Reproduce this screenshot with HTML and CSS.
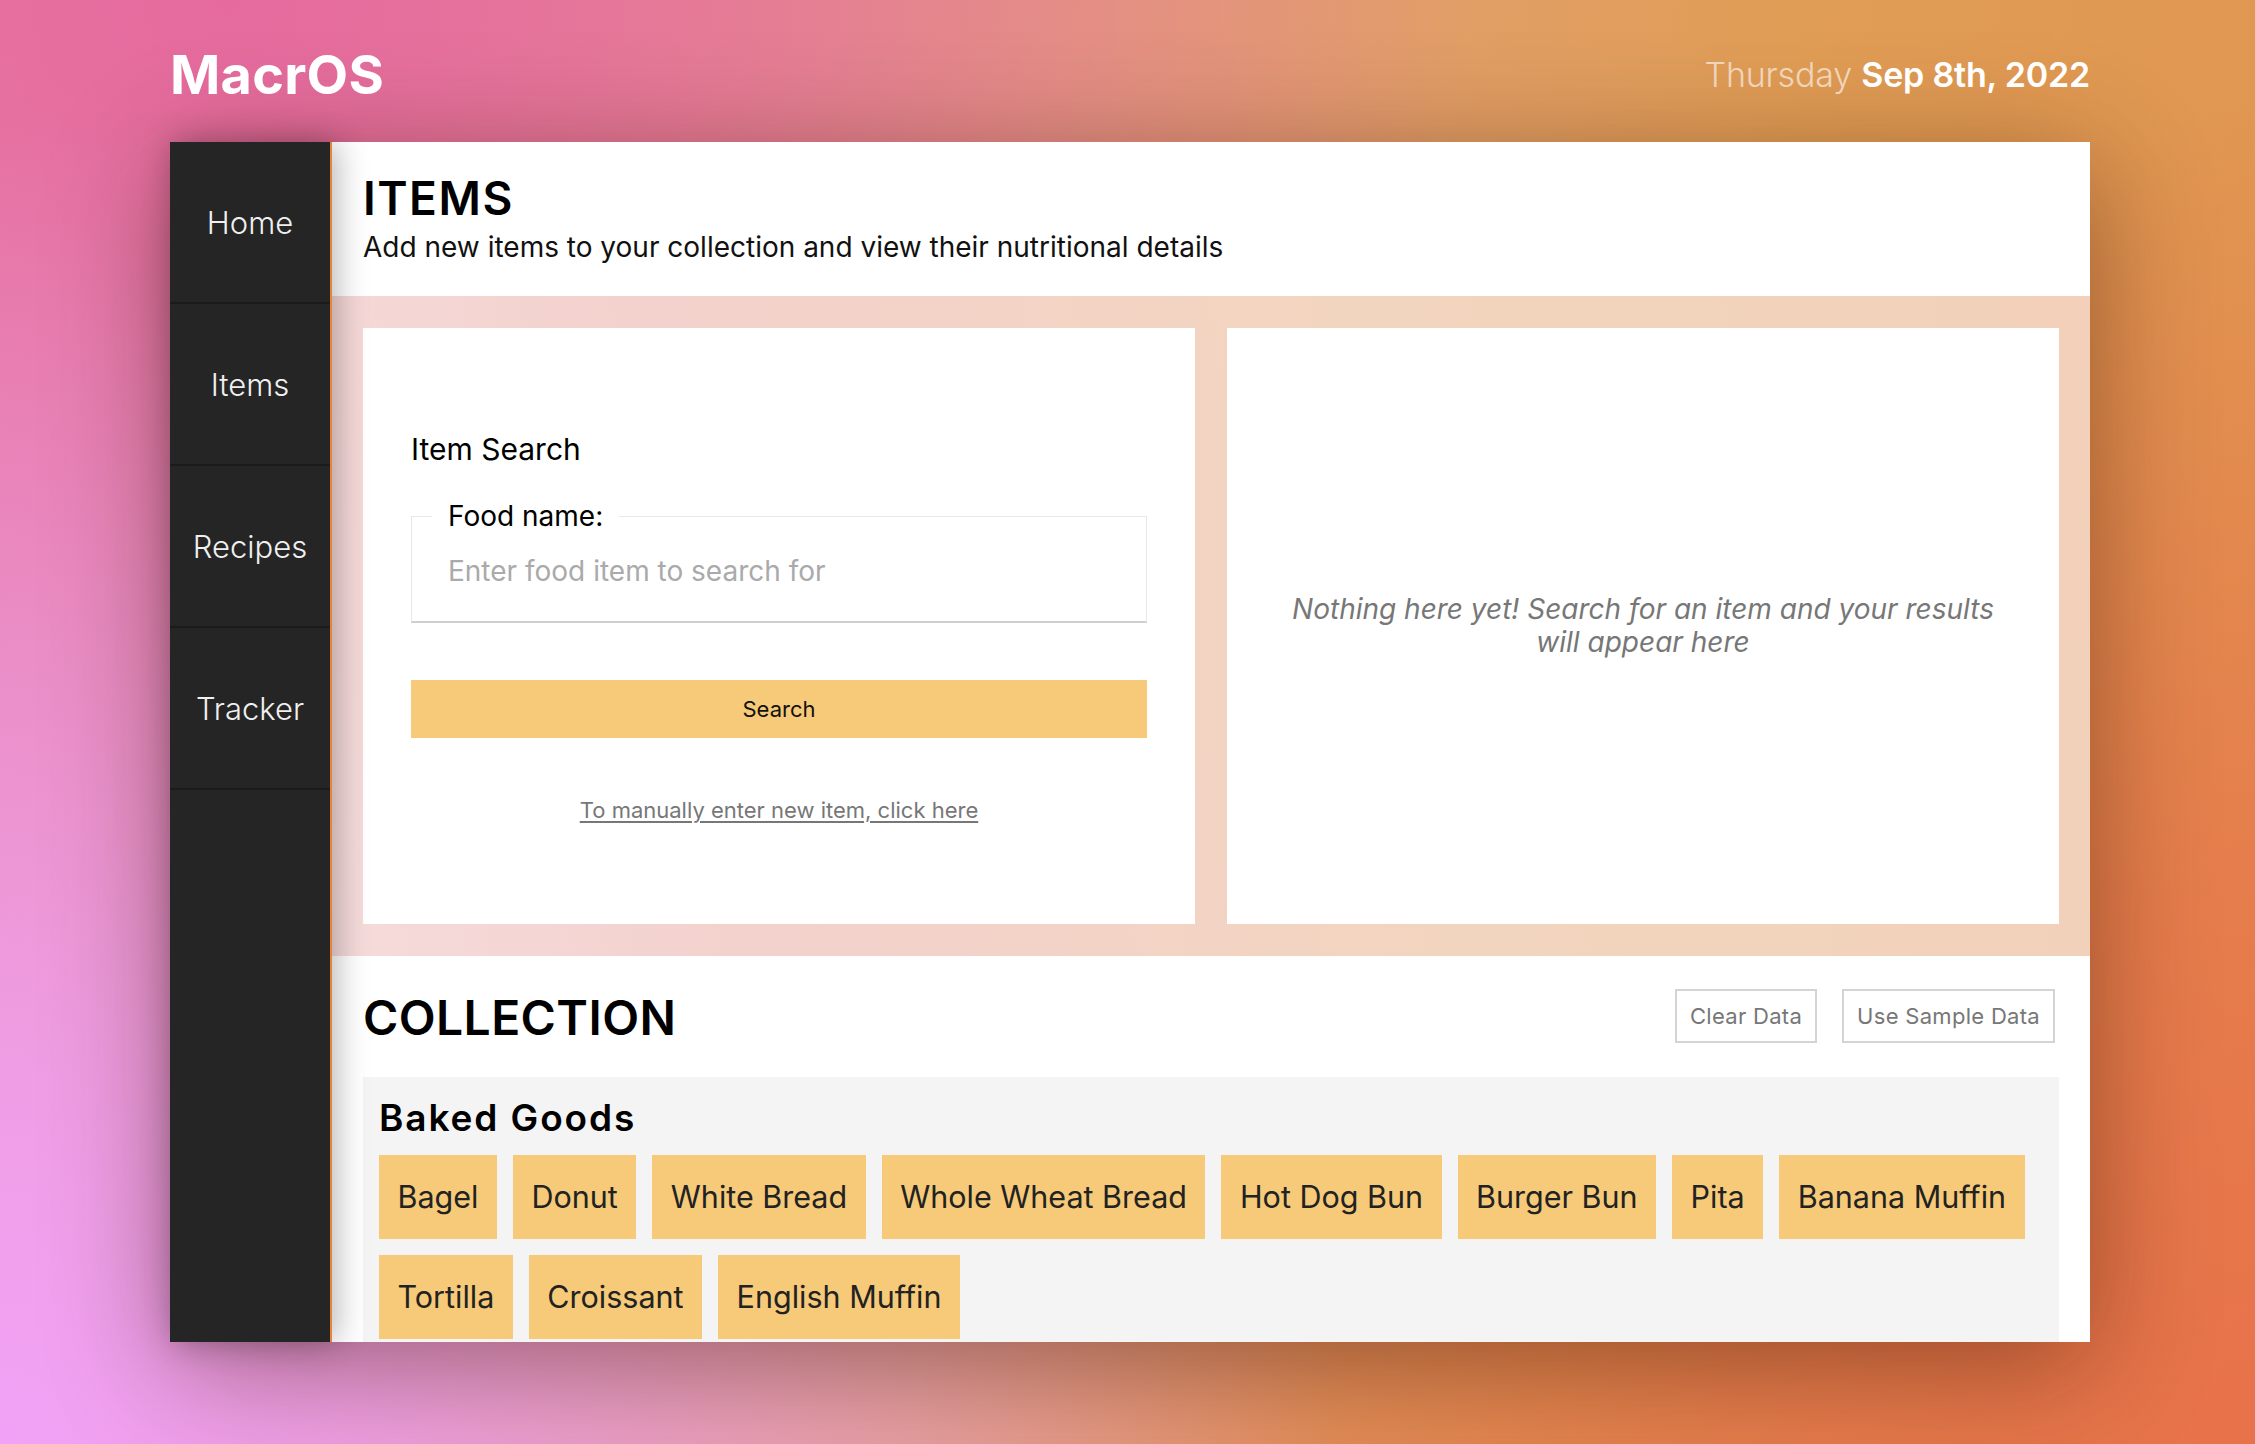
FILE: index.html
```html
<!DOCTYPE html>
<html lang="en">
<head>
<meta charset="utf-8">
<title>MacrOS - Items</title>
<link rel="stylesheet" href="styles.css">
</head>
<body>
<div class="page">
  <header class="topbar">
    <div class="logo">MacrOS</div>
    <div class="date"><span class="day">Thursday</span> <span class="dt">Sep 8th, 2022</span></div>
  </header>
  <div class="app">
    <nav class="sidebar">
      <a class="nav-item">Home</a>
      <a class="nav-item">Items</a>
      <a class="nav-item">Recipes</a>
      <a class="nav-item">Tracker</a>
    </nav>
    <main class="main">
      <section class="page-head">
        <h1 class="page-title">ITEMS</h1>
        <p class="page-sub">Add new items to your collection and view their nutritional details</p>
      </section>
      <section class="band">
        <div class="card search-card">
          <h2 class="search-title">Item Search</h2>
          <fieldset class="field">
            <legend class="field-label">Food name:</legend>
            <input class="field-input" type="text" placeholder="Enter food item to search for">
          </fieldset>
          <button class="search-btn">Search</button>
          <a class="manual-link">To manually enter new item, click here</a>
        </div>
        <div class="card results-card">
          <p class="empty-msg">Nothing here yet! Search for an item and your results will appear here</p>
        </div>
      </section>
      <section class="collection">
        <div class="collection-head">
          <h2 class="collection-title">COLLECTION</h2>
          <div class="collection-actions">
            <button class="ghost-btn">Clear Data</button>
            <button class="ghost-btn">Use Sample Data</button>
          </div>
        </div>
        <div class="group">
          <h3 class="group-title">Baked Goods</h3>
          <div class="chips">
            <span class="chip">Bagel</span>
            <span class="chip">Donut</span>
            <span class="chip">White Bread</span>
            <span class="chip">Whole Wheat Bread</span>
            <span class="chip">Hot Dog Bun</span>
            <span class="chip">Burger Bun</span>
            <span class="chip">Pita</span>
            <span class="chip">Banana Muffin</span>
            <span class="chip">Tortilla</span>
            <span class="chip">Croissant</span>
            <span class="chip">English Muffin</span>
          </div>
        </div>
      </section>
    </main>
  </div>
</div>
</body>
</html>
```

FILE: styles.css
```css
* { box-sizing: border-box; }

html, body {
  margin: 0;
  padding: 0;
}

body {
  width: 2255px;
  height: 1444px;
  overflow: hidden;
  font-family: "Inter", "Noto Sans", "Liberation Sans", sans-serif;
  background-color: #e39a6a;
  background-image:
    radial-gradient(circle at 0% 100%, #f2a2f6 0, rgba(242,162,246,0.8) 14%, rgba(242,162,246,0) 50%),
    radial-gradient(circle at 100% 100%, #e8724a 0, rgba(232,114,74,0.7) 20%, rgba(232,114,74,0) 50%),
    radial-gradient(circle at 10% 0%, #e66a9e 0, rgba(230,106,158,0.6) 22%, rgba(230,106,158,0) 50%),
    linear-gradient(100deg, #e48aa6 0%, #e3a07a 42%, #e09d55 72%, #e0944f 100%);
}

.page {
  padding-left: 170px;
  width: 2090px;
}

/* Top bar */
.topbar {
  height: 142px;
  padding-top: 7px;
  display: flex;
  justify-content: space-between;
  align-items: center;
  color: #fff;
}

.logo {
  font-size: 54px;
  font-weight: 700;
  letter-spacing: 0.3px;
}

.date {
  font-size: 34px;
  letter-spacing: -0.2px;
}

.date .day {
  font-weight: 300;
  color: rgba(255,255,255,0.6);
}

.date .dt {
  font-weight: 600;
}

/* App panel */
.app {
  width: 1920px;
  height: 1200px;
  display: flex;
  box-shadow: 0 24px 110px rgba(60, 20, 0, 0.45);
}

.sidebar {
  width: 162px;
  flex: none;
  background: #252525;
  border-right: 2px solid #e8843a;
  display: flex;
  flex-direction: column;
  position: relative;
  z-index: 2;
  box-shadow: 4px 0 30px rgba(0,0,0,0.3);
}

.nav-item {
  height: 162px;
  border-bottom: 2px solid #1b1b1b;
  display: flex;
  align-items: center;
  justify-content: center;
  color: #f0f0f0;
  font-size: 31px;
  font-weight: 300;
  text-decoration: none;
}

.main {
  flex: 1;
  background: #fff;
  overflow: hidden;
  display: flex;
  flex-direction: column;
}

/* Page header */
.page-head {
  height: 154px;
  padding: 28px 31px 0;
  flex: none;
}

.page-title {
  margin: 0;
  font-size: 46px;
  line-height: 56px;
  font-weight: 600;
  letter-spacing: 1.5px;
  color: #000;
}

.page-sub {
  margin: 5px 0 0;
  font-size: 28px;
  line-height: 32px;
  color: #111;
}

/* Band with two cards */
.band {
  flex: none;
  height: 660px;
  padding: 32px 31px;
  display: flex;
  gap: 32px;
  background: linear-gradient(80deg, #f5dbdb 0%, #f3d1cd 22%, #f2d5be 62%, #f2d0b9 100%);
}

.card {
  flex: 1;
  background: #fff;
  height: 596px;
}

.search-card {
  padding: 103px 48px 0;
  display: flex;
  flex-direction: column;
}

.search-title {
  margin: 0;
  font-size: 30px;
  font-weight: 400;
  color: #000;
  line-height: 36px;
}

.field {
  margin: 32px 0 0;
  padding: 0 20px 8px;
  border: 1px solid #e8e8e8;
  border-bottom: 2px solid #cfcfcf;
  min-width: 0;
}

.field-label {
  padding: 0 16px;
  font-size: 28px;
  line-height: 34px;
  color: #000;
}

.field-input {
  display: block;
  width: 100%;
  height: 80px;
  border: none;
  outline: none;
  padding: 0 16px 4px;
  font-family: inherit;
  font-size: 28px;
  color: #222;
  background: transparent;
}

.field-input::placeholder {
  color: #aaaaaa;
}

.search-btn {
  margin-top: 57px;
  height: 58px;
  border: none;
  background: #f6ca78;
  font-family: inherit;
  font-size: 22px;
  color: #111;
}

.manual-link {
  margin-top: 59px;
  align-self: center;
  font-size: 22px;
  line-height: 27px;
  color: #777;
  text-decoration: underline;
  text-underline-offset: 3px;
}

.results-card {
  display: flex;
  align-items: center;
  justify-content: center;
  padding: 0 48px;
}

.empty-msg {
  margin: 0;
  max-width: 730px;
  text-align: center;
  font-style: italic;
  font-size: 28px;
  line-height: 33px;
  color: #777;
}

/* Collection */
.collection {
  padding: 33px 31px 0;
}

.collection-head {
  display: flex;
  justify-content: space-between;
  align-items: center;
  height: 58px;
}

.collection-title {
  margin: 0;
  font-size: 48px;
  line-height: 58px;
  font-weight: 600;
  letter-spacing: 0.4px;
  color: #000;
}

.collection-actions {
  display: flex;
  gap: 25px;
  margin-right: 4px;
  margin-top: -4px;
}

.ghost-btn {
  height: 54px;
  padding: 0 13px;
  background: #fff;
  border: 2px solid #d4d4d4;
  font-family: inherit;
  font-size: 22px;
  color: #777;
  letter-spacing: 0.3px;
}

.group {
  margin-top: 30px;
  background: #f4f4f4;
  padding: 18px 16px;
}

.group-title {
  margin: 0 0 15px;
  font-size: 37px;
  line-height: 45px;
  font-weight: 600;
  letter-spacing: 1.9px;
  color: #000;
}

.chips {
  display: flex;
  flex-wrap: wrap;
  gap: 16px;
}

.chip {
  background: #f6ca78;
  padding: 23px 18.5px;
  font-size: 30.5px;
  line-height: 38px;
  color: #222;
}
```
